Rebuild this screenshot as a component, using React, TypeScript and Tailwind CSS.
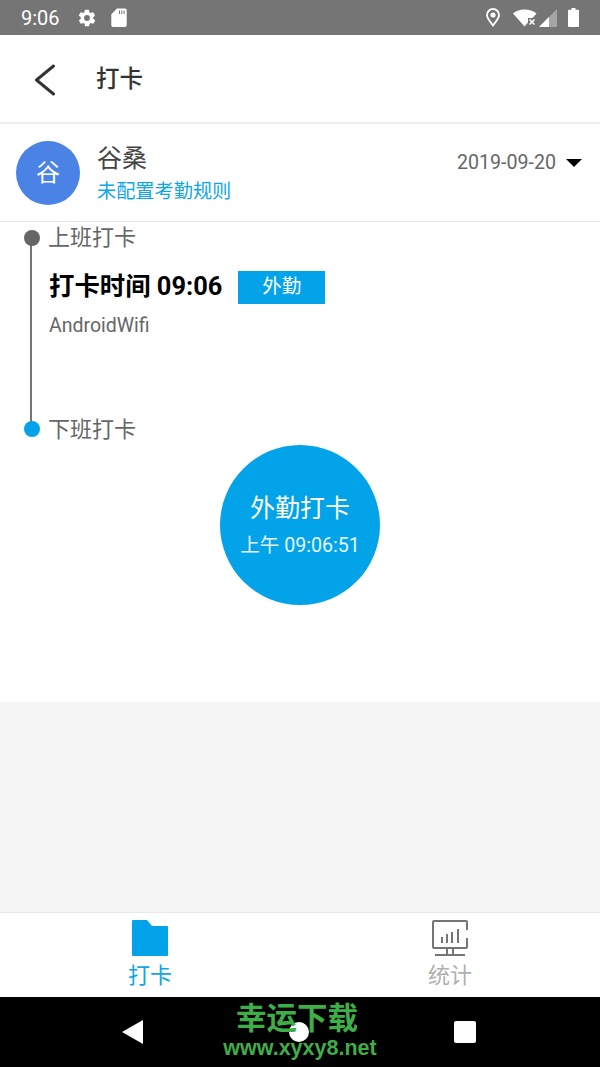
const cjk = { fontFamily: '"Roboto", "Noto Sans CJK SC", sans-serif' };

const StatusBar = () => (
  <div className="flex h-[35px] items-center bg-[#757575] pl-[21px] pr-[21px] text-white">
    <span className="text-[20px] leading-none">9:06</span>
    <svg className="ml-[17px]" width="20" height="20" viewBox="0 0 24 24" fill="#fff">
      <path d="M19.4 13a7.5 7.5 0 0 0 0-2l2.1-1.6a.5.5 0 0 0 .1-.6l-2-3.5a.5.5 0 0 0-.6-.2l-2.5 1a7.3 7.3 0 0 0-1.7-1l-.4-2.6a.5.5 0 0 0-.5-.4h-4a.5.5 0 0 0-.5.4l-.4 2.6a7.3 7.3 0 0 0-1.7 1l-2.5-1a.5.5 0 0 0-.6.2l-2 3.5a.5.5 0 0 0 .1.6L4.6 11a7.5 7.5 0 0 0 0 2l-2.1 1.6a.5.5 0 0 0-.1.6l2 3.5a.5.5 0 0 0 .6.2l2.5-1a7.3 7.3 0 0 0 1.7 1l.4 2.6a.5.5 0 0 0 .5.4h4a.5.5 0 0 0 .5-.4l.4-2.6a7.3 7.3 0 0 0 1.7-1l2.5 1a.5.5 0 0 0 .6-.2l2-3.5a.5.5 0 0 0-.1-.6zM12 15.5a3.5 3.5 0 1 1 0-7 3.5 3.5 0 0 1 0 7z" />
    </svg>
    <svg className="ml-[14px]" width="16" height="19" viewBox="0 0 16 19" fill="#fff">
      <path d="M6 .5h8A1.7 1.7 0 0 1 15.7 2.2v15A1.7 1.7 0 0 1 14 18.9H2A1.7 1.7 0 0 1 .3 17.2V6.2z" />
      <path d="M8 2.5h1v3.4H8zM10.3 2.500h1v3.400h-1zM12.600 2.500h1v3.400h-1z" fill="#757575" />
    </svg>
    <div className="ml-auto flex items-center">
      <svg width="14" height="19" viewBox="0 0 14 19" fill="none" stroke="#fff" strokeWidth="1.800">
        <path d="M7 17.500C4.500 14 1 10.500 1 7a6 6 0 0 1 12 0c0 3.500-3.500 7-6 10.500z" />
        <circle cx="7" cy="7" r="1.700" fill="#fff" />
      </svg>
      <svg className="ml-[13px]" width="24" height="18" viewBox="0 0 24 18">
        <path d="M0 4.500C3 2 7 .5 11.500.5c4.500 0 9 1.500 12 4l-4 4.500H15v4.500l-3.500 4z" fill="#fff" />
        <path d="M16.500 10.500l5 5M21.500 10.500l-5 5" stroke="#fff" strokeWidth="1.600" />
      </svg>
      <svg className="ml-[2px]" width="18" height="18" viewBox="0 0 18 18">
        <path d="M0 18L18 0v18z" fill="#fff" fillOpacity="0.35" />
        <path d="M0 18L10 8v10z" fill="#fff" />
      </svg>
      <svg className="ml-[11px]" width="11" height="19" viewBox="0 0 11 19" fill="#fff">
        <path d="M3.500 0h4v1.800H10a1 1 0 0 1 1 1V18a1 1 0 0 1-1 1H1a1 1 0 0 1-1-1V2.800a1 1 0 0 1 1-1h2.500z" />
      </svg>
    </div>
  </div>
);

const Header = () => (
  <div className="flex h-[89px] items-center border-b-2 border-[#eeeeee] pl-[34px]">
    <svg width="22" height="32" viewBox="0 0 22 32" fill="none" stroke="#333" strokeWidth="3" strokeLinecap="round" strokeLinejoin="round" className="mt-[2px]">
      <path d="M19.500 2L2.500 16l17 14" />
    </svg>
    <span className="ml-[40px] mt-[3px] text-[23.500px] font-medium leading-none text-[#333]">打卡</span>
  </div>
);

const UserRow = () => (
  <div className="flex h-[98px] items-center border-b border-[#e4e4e4] pl-[16px] pr-[18px]">
    <div className="flex h-[64px] w-[64px] items-center justify-center rounded-full bg-[#4a82e6] text-[24px] text-white">谷</div>
    <div className="ml-[17px] mt-[3px]">
      <div className="text-[25px] leading-[31px] text-[#444]">谷桑</div>
      <div className="mt-[3px] text-[19.200px] leading-[29px] text-[#0ea5e9]">未配置考勤规则</div>
    </div>
    <div className="mb-[19px] ml-auto flex items-center">
      <span className="text-[19.600px] text-[#666]">2019-09-20</span>
      <div className="ml-[10px] h-0 w-0 border-x-[8px] border-t-[8px] border-x-transparent border-t-black" />
    </div>
  </div>
);

const Timeline = () => (
  <div className="flex h-[480px] flex-col bg-white">
    <div className="flex">
      <div className="relative flex w-[49px] shrink-0 justify-center">
        <div className="absolute left-[30px] top-[16px] h-[192px] w-[2px] bg-[#757575]" />
        <div className="absolute left-[24px] top-[8px] h-[16px] w-[16px] rounded-full bg-[#666]" />
      </div>
      <div className="flex-1">
        <div className="ml-[-1px] h-[32px] text-[22px] leading-[32px] text-[#666]">上班打卡</div>
        <div className="mt-[8px] flex h-[50px] items-center">
          <span className="text-[25.400px] font-bold leading-none text-black">打卡时间 09:06</span>
          <span className="ml-[16px] flex h-[33px] w-[87px] items-center justify-center bg-[#03a3ea] text-[19.500px] text-white">外勤</span>
        </div>
        <div className="h-[28px] text-[19.500px] leading-[28px] text-[#666]">AndroidWifi</div>
      </div>
    </div>
    <div className="mt-[74px] flex">
      <div className="relative w-[48px] shrink-0">
        <div className="absolute left-[24px] top-[7px] h-[16px] w-[16px] rounded-full bg-[#03a3ea]" />
      </div>
      <div className="h-[31px] text-[22px] leading-[32px] text-[#666]">下班打卡</div>
    </div>
    <div className="flex justify-center">
      <div className="flex h-[160px] w-[160px] flex-col items-center justify-center rounded-full bg-[#03a3ea] text-white">
        <div className="text-[25px] leading-[36px]">外勤打卡</div>
        <div className="mt-[6px] text-[19.600px] leading-[26px] text-[#e6f5fd]">上午 09:06:51</div>
      </div>
    </div>
  </div>
);

const TabBar = () => (
  <div className="flex h-[85px] border-t border-[#e8e8e8] bg-white">
    <div className="flex flex-1 flex-col items-center pt-[7px]">
      <svg width="36" height="36" viewBox="0 0 36 36" fill="#03a3ea">
        <path d="M1 0h14l5 6h15a1 1 0 0 1 1 1v28a1 1 0 0 1-1 1H1a1 1 0 0 1-1-1V1a1 1 0 0 1 1-1z" />
      </svg>
      <span className="mt-[5px] text-[22px] leading-[30px] text-[#0ea5e9]">打卡</span>
    </div>
    <div className="flex flex-1 flex-col items-center pt-[7px]">
      <svg width="36" height="36" viewBox="0 0 36 36" fill="none" stroke="#757575" strokeWidth="2">
        <path d="M35 10V2a1 1 0 0 0-1-1H2a1 1 0 0 0-1 1v25a1 1 0 0 0 1 1h32a1 1 0 0 0 1-1V18" />
        <path d="M10 23v-6M15 23v-9M20 23v-11M26 23V9" />
        <path d="M15 28v7M21 28v7M3 35h30" />
      </svg>
      <span className="mt-[5px] text-[22px] leading-[30px] text-[#b0b0b0]">统计</span>
    </div>
  </div>
);

const NavBar = () => (
  <div className="relative flex h-[70px] items-center justify-between bg-black pl-[122px] pr-[124px]">
    <div className="h-0 w-0 border-y-[12px] border-r-[21px] border-y-transparent border-r-white" />
    <div className="h-[20px] w-[20px] rounded-full bg-white" />
    <div className="h-[22px] w-[22px] rounded-[2px] bg-white" />
    <div className="absolute left-0 right-0 top-[5px] flex flex-col items-center font-bold text-[#3fae49]">
      <div className="mr-[6px] h-[34px] text-[30.500px] leading-[34px]">幸运下载</div>
      <div className="mt-[-1px] text-[21.500px] leading-[26px]" style={{ fontFamily: '"Liberation Sans", sans-serif' }}>www.xyxy8.net</div>
    </div>
  </div>
);

export default function App() {
  return (
    <div className="flex h-[1067px] w-[600px] flex-col overflow-hidden bg-[#f5f5f5]" style={cjk}>
      <StatusBar />
      <div className="bg-white">
        <Header />
        <UserRow />
      </div>
      <Timeline />
      <div className="flex-1" />
      <TabBar />
      <NavBar />
    </div>
  );
}
